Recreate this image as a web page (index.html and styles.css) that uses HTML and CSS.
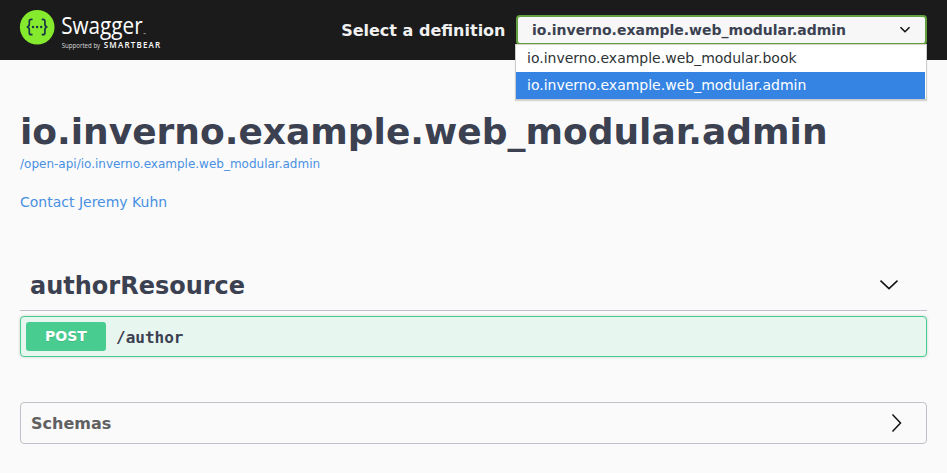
FILE: index.html
```html
<!DOCTYPE html>
<html lang="en">
<head>
<meta charset="utf-8">
<title>Swagger UI</title>
<link rel="stylesheet" href="styles.css">
</head>
<body>
<header class="topbar">
  <a class="logo">
    <svg width="142" height="42" viewBox="0 0 142 42">
      <circle cx="17.2" cy="17.2" r="17.3" fill="#85ea2d"/>
      <g fill="none" stroke="#173647" stroke-width="1.7">
        <path d="M12.5 9.3h-1.2q-2 0-2 2v2.8q0 2.9-2.6 2.9q2.6 0 2.6 2.9v2.8q0 2 2 2h1.2"/>
        <path d="M21.7 9.3h1.2q2 0 2 2v2.8q0 2.9 2.6 2.9q-2.6 0-2.6 2.9v2.8q0 2-2 2h-1.2"/>
      </g>
      <g fill="#173647"><circle cx="13" cy="17" r="1.2"/><circle cx="17.1" cy="17" r="1.2"/><circle cx="21.2" cy="17" r="1.2"/></g>
      <text class="logo-name" x="41.2" y="24.4" textLength="81.5" lengthAdjust="spacingAndGlyphs">Swagger</text>
      <path d="M123.5 23.6h2.3" stroke="#aaa" stroke-width=".8"/>
      <text class="logo-by" x="41.7" y="38" textLength="38.5" lengthAdjust="spacingAndGlyphs">Supported by</text>
      <text class="logo-brand" x="83.7" y="38" textLength="56.5">SMARTBEAR</text>
    </svg>
  </a>
  <div class="picker">
    <span class="picker-label">Select a definition</span>
    <div class="select">
      <span>io.inverno.example.web_modular.admin</span>
      <svg width="12" height="8" viewBox="0 0 12 8"><path d="M1.5 1.3L6 5.7l4.5-4.4" fill="none" stroke="#111" stroke-width="1.6"/></svg>
      <ul class="menu">
        <li>io.inverno.example.web_modular.book</li>
        <li class="active">io.inverno.example.web_modular.admin</li>
      </ul>
    </div>
  </div>
</header>
<main>
  <h1>io.inverno.example.web_modular.admin</h1>
  <a class="spec">/open-api/io.inverno.example.web_modular.admin</a>
  <a class="contact">Contact Jeremy Kuhn</a>
  <section>
    <h2>authorResource
      <svg width="20" height="12" viewBox="0 0 20 12"><path d="M1.5 .6L10 8.6l8.5-8" fill="none" stroke="#111" stroke-width="1.5"/></svg>
    </h2>
    <div class="operation">
      <span class="method">POST</span>
      <span class="path">/author</span>
    </div>
  </section>
  <section class="schemas">
    <h3>Schemas</h3>
    <svg width="12" height="20" viewBox="0 0 12 20"><path d="M1.5 1.5l8 8.5-8 8.5" fill="none" stroke="#111" stroke-width="1.5"/></svg>
  </section>
</main>
</body>
</html>
```
FILE: styles.css
```css
* { box-sizing: border-box; }
body {
  margin: 0;
  background: #fafafa;
  color: #3b4151;
  font-family: "DejaVu Sans", sans-serif;
  overflow: hidden;
}
svg { display: block; flex: none; }
h1, h2, h3, ul { margin: 0; padding: 0; }
.topbar {
  display: flex;
  justify-content: space-between;
  height: 60px;
  padding: 10px 20px;
  background: #1b1b1b;
}
.logo svg { overflow: visible; }
.logo text { font-family: "Open Sans", sans-serif; fill: #fff; }
.logo .logo-name { font-size: 23px; }
.logo .logo-by { font-size: 6.2px; fill: #ddd; }
.logo .logo-brand { font-size: 8px; font-weight: 600; }
.picker { display: flex; align-items: center; }
.picker-label {
  margin-right: 10.5px;
  color: #f0f0f0;
  font-size: 16px;
  font-weight: 700;
}
.select {
  position: relative;
  display: flex;
  align-items: center;
  justify-content: space-between;
  width: 411px;
  height: 30px;
  padding: 0 14px;
  border: 2px solid #62a03f;
  border-radius: 4px;
  background: #f7f7f7;
  font-size: 14px;
  font-weight: 700;
}
.menu {
  position: absolute;
  z-index: 1;
  top: 27px;
  left: -3px;
  width: 412px;
  padding: 0 1px 0 0;
  border: 1px solid #ccc;
  border-top-color: #d8d4cc;
  background: #fff;
  box-shadow: 0 1px 1px rgba(0, 0, 0, .15);
  color: #2e3436;
  font-weight: 400;
  list-style: none;
}
.menu li { height: 27px; padding-left: 11px; line-height: 26px; }
.menu .active { background: #3584e4; color: #fff; }
main { padding: 51px 20px 0; }
h1 { font-size: 36px; line-height: 42px; }
.spec, .contact { display: block; color: #4990e2; }
.spec { margin-top: 3px; font-size: 12px; line-height: 16px; }
.contact { margin-top: 21px; font-size: 14px; line-height: 18px; }
h2 {
  display: flex;
  align-items: center;
  justify-content: space-between;
  height: 50px;
  margin-top: 50px;
  padding: 0 28px 0 10px;
  border-bottom: 1px solid #bfc1cb;
  font-size: 24px;
}
.operation {
  display: flex;
  align-items: center;
  height: 41px;
  margin-top: 5px;
  padding: 0 5px;
  border: 1px solid #49cc90;
  border-radius: 4px;
  background: #e8f6f0;
  box-shadow: 0 0 3px rgba(0, 0, 0, .19);
}
.method {
  width: 80px;
  height: 29px;
  border-radius: 3px;
  background: #49cc90;
  color: #fff;
  font-size: 14px;
  font-weight: 700;
  line-height: 28px;
  text-align: center;
  text-shadow: 0 1px 0 rgba(0, 0, 0, .1);
}
.path {
  padding: 2px 0 0 10px;
  font: 700 16px "DejaVu Sans Mono", monospace;
}
.schemas {
  display: flex;
  align-items: center;
  justify-content: space-between;
  height: 42px;
  margin-top: 45px;
  padding: 0 23px 0 10px;
  border: 1px solid #bfc1c9;
  border-radius: 4px;
}
h3 { color: #606060; font-size: 16px; }
```
